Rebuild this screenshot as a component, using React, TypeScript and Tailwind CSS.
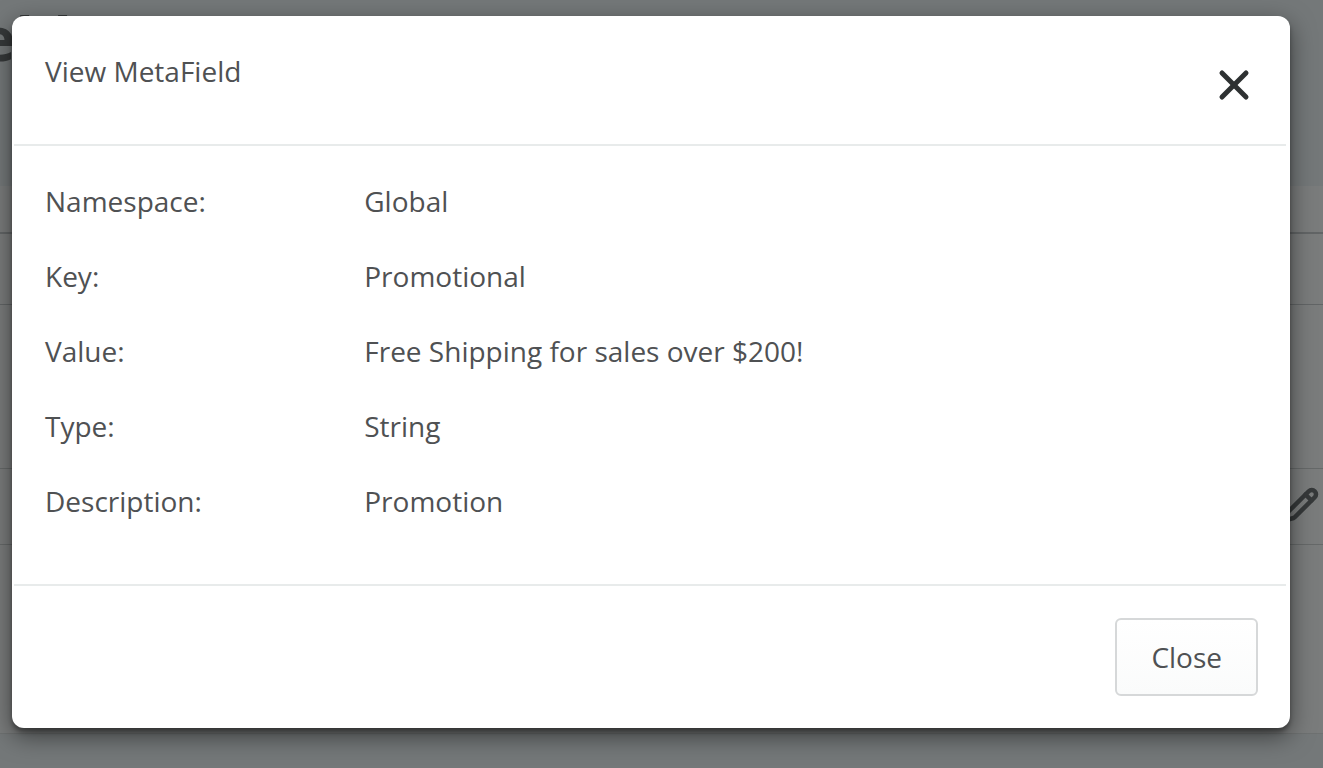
import { X, Pencil } from "lucide-react";

const fields = [
  { label: "Namespace:", value: "Global" },
  { label: "Key:", value: "Promotional" },
  { label: "Value:", value: "Free Shipping for sales over $200!" },
  { label: "Type:", value: "String" },
  { label: "Description:", value: "Promotion" },
];

function PageBehind() {
  return (
    <div className="absolute inset-0 flex flex-col overflow-hidden bg-[#747879]" aria-hidden="true">
      <div className="flex h-[186px] shrink-0 justify-start">
        <span className="-ml-5 text-6xl leading-[76px] font-bold text-[#36393a]">eld</span>
      </div>
      <div className="h-12 shrink-0 border-b-2 border-[#626566] bg-[#7a7c7c]" />
      <div className="h-[71px] shrink-0 border-b border-[#626566] bg-[#7a7c7c]" />
      <div className="h-[164px] shrink-0 border-b border-[#666969] bg-[#7a7c7c]" />
      <div className="flex h-[76px] shrink-0 items-center justify-end border-b border-[#666969] bg-[#7a7c7c] pr-1 pb-1">
        <Pencil className="size-9 text-[#36393a]" strokeWidth={3} />
      </div>
      <div className="h-[189px] shrink-0 border-b border-[#6e7171] bg-[#7a7c7c]" />
    </div>
  );
}

export default function App() {
  return (
    <div className="relative min-h-screen font-['Open_Sans','Noto_Sans',sans-serif] text-[28px] leading-9 text-[#4f5153]">
      <PageBehind />
      <div className="relative pt-4 pr-[33px] pb-10 pl-3">
        <div
          role="dialog"
          aria-labelledby="dialog-title"
          className="rounded-xl bg-white shadow-[0_8px_24px_rgba(0,0,0,0.5),0_4px_4px_rgba(0,0,0,0.3)]"
        >
          <header className="mr-1 ml-0.5 flex h-[130px] items-start justify-between border-b-2 border-[#e8ebeb] pt-[37px] pr-7 pl-[31px]">
            <h1 id="dialog-title">View MetaField</h1>
            <button type="button" aria-label="Dismiss" className="pt-2 text-[#2e3132]">
              <X className="size-12" strokeWidth={2.5} />
            </button>
          </header>
          <dl className="mr-1 ml-0.5 flex flex-col gap-[39px] border-b-2 border-[#e8ebeb] pt-[37px] pr-7 pb-[65px] pl-[31px]">
            {fields.map((f) => (
              <div key={f.label} className="grid grid-cols-4">
                <dt>{f.label}</dt>
                <dd className="col-span-3 pl-4">{f.value}</dd>
              </div>
            ))}
          </dl>
          <footer className="flex justify-end px-8 py-8">
            <button
              type="button"
              className="h-[78px] rounded-md border-2 border-[#d6d8d9] bg-linear-to-b from-white to-[#fafbfb] px-[34px]"
            >
              Close
            </button>
          </footer>
        </div>
      </div>
    </div>
  );
}
